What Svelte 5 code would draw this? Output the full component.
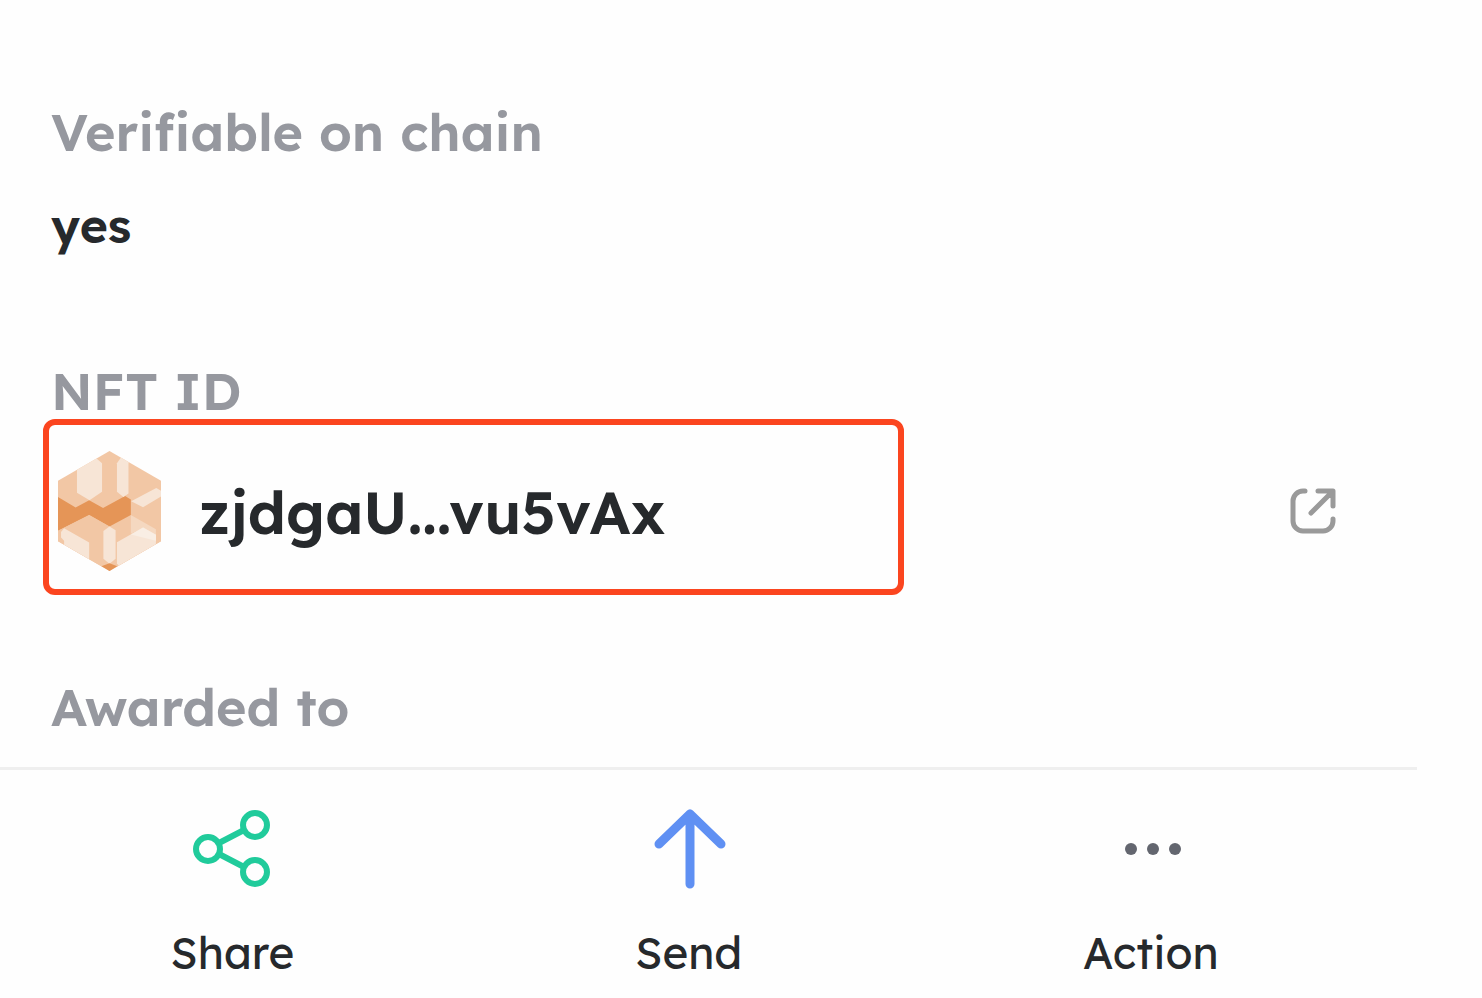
<script>
  const nftId = 'zjdgaU...vu5vAx';
</script>

<div class="page">
  <main>
    <dl>
      <div class="field">
        <dt>Verifiable on chain</dt>
        <dd class="value">yes</dd>
      </div>
      <div class="field">
        <dt>NFT ID</dt>
        <dd class="id-row">
          <div class="id-box">
            <svg class="avatar" viewBox="58 127 304 354" aria-hidden="true">
              <clipPath id="hex"><path d="M210 127 362 215V393L210 481 58 393V215Z" /></clipPath>
              <g clip-path="url(#hex)">
                <path fill="#f2c7a5" d="M58 127H362V481H58Z" />
                <path fill="#e59557" d="M58 263 110 294 150 272 191 295 256 260 273 270V343L210 350 150 316 58 362Z" />
                <path fill="#f2c7a5" d="M58 362 150 316 210 350 273 316 362 370V481H58Z" />
                <path fill="#f7e5d6" d="M114 140H162L188 163V247L151 272 114 250Z" />
                <path fill="#f7e5d6" d="M232 163 248 140 266 160V252L251 263 232 247Z" />
                <path fill="#f7e5d6" d="M274 275 348 236 362 244V261L309 293Z" />
                <path fill="#f5d8c0" d="M273 316 347 358V380L309 355 273 371Z" />
                <path fill="#f7e5d6" d="M67 366 76 355 150 397V450H130L76 420V392L67 382Z" />
                <path fill="#f7e5d6" d="M192 363 210 350 228 361V445L210 460 192 445Z" />
                <path fill="#f7e5d6" d="M232 396 309 353 347 374V410L240 470 232 458Z" />
                <path fill="#f9eee4" d="M273 373 309 353 347 374V392Z" />
                <path fill="#e59557" d="M186 467 210 458 233 467 210 482Z" />
              </g>
            </svg>
            <span class="id">{nftId}</span>
          </div>
          <button class="open" aria-label="Open">
            <svg viewBox="0 0 46 46" aria-hidden="true">
              <path d="M15 3H13A10 10 0 0 0 3 13V33A10 10 0 0 0 13 43H33A10 10 0 0 0 43 33V31M28 3H43V18M42 4 21 25" />
            </svg>
          </button>
        </dd>
      </div>
      <div class="field">
        <dt>Awarded to</dt>
      </div>
    </dl>
  </main>
  <footer>
    <button>
      <svg viewBox="0 0 80 80" fill="none" stroke="#20cb9b" stroke-width="6" aria-hidden="true">
        <circle cx="16" cy="40" r="12" /><circle cx="63" cy="16" r="12" /><circle cx="63" cy="63" r="12" />
        <path d="M27 34 52 21M27 45 52 58" />
      </svg>
      <span>Share</span>
    </button>
    <button>
      <svg viewBox="0 0 80 80" fill="none" stroke="#5f90f3" stroke-width="9" stroke-linecap="round" stroke-linejoin="round" aria-hidden="true">
        <path d="M41 75V5M10 35 41 5 72 35" />
      </svg>
      <span>Send</span>
    </button>
    <button>
      <svg viewBox="0 0 80 80" fill="#63666f" aria-hidden="true">
        <circle cx="20" cy="40" r="6" /><circle cx="42" cy="40" r="6" /><circle cx="64" cy="40" r="6" />
      </svg>
      <span>Action</span>
    </button>
  </footer>
</div>

<style>
  :global(body) {
    margin: 0;
    background: #fefefe;
  }
  .page {
    color: #26292c;
    font-family: Lexend, Inter, sans-serif;
    font-feature-settings: 'cv11', 'cv08';
    overflow: hidden;
  }
  main {
    padding: 100px 146px 0 51px;
  }
  dl,
  dd {
    margin: 0;
  }
  dt {
    color: #96989f;
    font-size: 52px;
    font-weight: 600;
    line-height: 64px;
  }
  .value {
    font-size: 48px;
    font-weight: 600;
    line-height: 60px;
    margin-top: 31px;
  }
  .field {
    margin-bottom: 80px;
  }
  .field:first-child {
    margin-bottom: 104px;
  }
  .field:last-child {
    margin-bottom: 28px;
  }
  .id-row {
    display: flex;
    align-items: center;
    justify-content: space-between;
    margin-top: -4px;
  }
  .id-box {
    box-sizing: border-box;
    display: flex;
    align-items: center;
    gap: 38px;
    width: 67%;
    min-height: 176px;
    margin-left: -8px;
    padding: 12px 9px 4px;
    border: 6px solid #fb451f;
    border-radius: 12px;
  }
  .avatar {
    flex: none;
    width: 103px;
    height: 120px;
  }
  .id {
    padding-top: 2px;
    font-size: 59px;
    font-weight: 600;
    line-height: 72px;
  }
  button {
    padding: 0;
    border: 0;
    background: none;
    color: inherit;
    font: inherit;
    font-feature-settings: inherit;
    cursor: pointer;
  }
  .open {
    margin-top: 8px;
  }
  .open svg {
    display: block;
    width: 46px;
    height: 46px;
    fill: none;
    stroke: #9a9a9a;
    stroke-width: 5;
    stroke-linecap: round;
    stroke-linejoin: round;
  }
  footer {
    display: flex;
    justify-content: space-around;
    margin-right: 65px;
    padding: 39px 28px 10px 0;
    border-top: 3px solid #efefef;
  }
  footer button {
    display: flex;
    flex-direction: column;
    align-items: center;
    gap: 36px;
    font-size: 44px;
    line-height: 56px;
  }
  footer svg {
    width: 80px;
    height: 80px;
  }
</style>
